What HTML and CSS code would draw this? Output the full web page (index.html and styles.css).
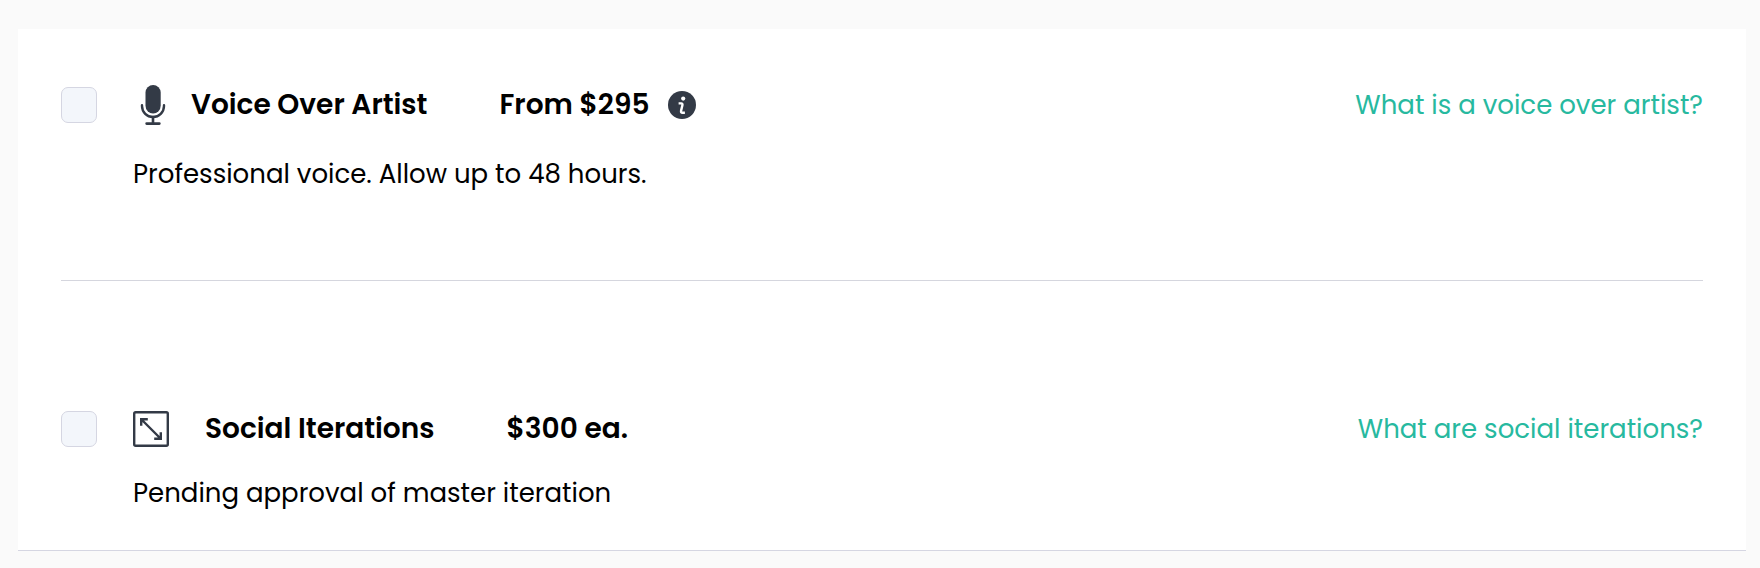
FILE: index.html
```html
<!DOCTYPE html>
<html lang="en">
<head>
  <meta charset="UTF-8">
  <meta name="viewport" content="width=device-width, initial-scale=1.0">
  <title>Extras</title>
  <link rel="stylesheet" href="styles.css">
</head>
<body>
  <main class="card">
    <section class="option">
      <input type="checkbox" class="check" id="voiceOver">
      <div class="details">
        <div class="heading">
          <label class="name" for="voiceOver">
            <svg width="40" height="40" viewBox="0 0 40 40" aria-hidden="true">
              <rect x="12.5" y="0" width="15.2" height="28.4" rx="7.6" fill="#333a46"/>
              <path d="M9 20.2v.8a11 11 0 0 0 22 0v-.8" fill="none" stroke="#333a46" stroke-width="2.4" stroke-linecap="round"/>
              <path d="M20 32v6.4M13.6 38.6h12.8" fill="none" stroke="#333a46" stroke-width="2.6" stroke-linecap="round"/>
            </svg>
            Voice Over Artist
          </label>
          <span class="price">From $295</span>
          <button class="info" type="button" aria-label="Price details">
            <svg width="28" height="28" viewBox="0 0 28 28" aria-hidden="true">
              <circle cx="14" cy="14" r="14" fill="#333a46"/>
              <circle cx="15.2" cy="7.6" r="2.1" fill="#fff"/>
              <path d="M10.6 12.4h2.6q1.6 0 1.2 1.8l-1.3 5.4q-.4 2.2 1.4 2.2h2.4" fill="none" stroke="#fff" stroke-width="2.4" stroke-linejoin="round"/>
            </svg>
          </button>
          <a class="help" href="#">What is a voice over artist?</a>
        </div>
        <p class="note">Professional voice. Allow up to 48 hours.</p>
      </div>
    </section>

    <section class="option compact">
      <input type="checkbox" class="check" id="social">
      <div class="details">
        <div class="heading">
          <label class="name" for="social">
            <svg width="36" height="36" viewBox="0 0 36 36" aria-hidden="true" fill="none" stroke="#333a46" stroke-width="2.4">
              <rect x="1.2" y="1.2" width="33.6" height="33.6" rx="1.5"/>
              <path d="M8.5 8.5l19 19M8.2 14.8V8.2h6.6M27.8 21.2v6.6h-6.6"/>
            </svg>
            Social Iterations
          </label>
          <span class="price">$300 ea.</span>
          <a class="help" href="#">What are social iterations?</a>
        </div>
        <p class="note">Pending approval of master iteration</p>
      </div>
    </section>
  </main>
</body>
</html>
```
FILE: styles.css
```css
* {
  box-sizing: border-box;
}

body {
  margin: 0;
  padding: 29px 14px 17px 18px;
  background: #fafafa;
  color: #000;
  font-family: Poppins, Inter, sans-serif;
  font-size: 26px;
  line-height: 40px;
}

.card {
  background: #fff;
  padding: 0 43px;
  border-bottom: 1px solid #d5d6e2;
}

.option {
  display: flex;
  gap: 36px;
  padding: 56px 0 86px;
}

.option + .option {
  padding: 128px 0 37px;
  border-top: 1px solid #d5d6de;
}

.check {
  appearance: none;
  flex: none;
  width: 36px;
  height: 36px;
  margin: 2px 0;
  background: #f3f6fb;
  border: 1px solid #d5d6e2;
  border-radius: 7px;
  cursor: pointer;
}

.check:checked {
  background: #27b99f;
}

.details {
  flex: 1;
}

.heading {
  display: flex;
  align-items: center;
  min-height: 40px;
}

.name {
  display: flex;
  align-items: center;
  gap: 18px;
  margin-right: 72px;
  font-size: 28px;
  font-weight: 600;
  cursor: pointer;
}

.compact .name {
  gap: 36px;
}

.price {
  font-size: 28px;
  font-weight: 600;
}

.info {
  display: flex;
  margin-left: 19px;
  padding: 0;
  background: none;
  border: none;
  cursor: pointer;
}

.help {
  margin-left: auto;
  color: #27b99f;
  text-decoration: none;
}

.help:hover {
  text-decoration: underline;
}

.note {
  margin: 29px 0 0;
}

.compact .note {
  margin-top: 24px;
}
```
